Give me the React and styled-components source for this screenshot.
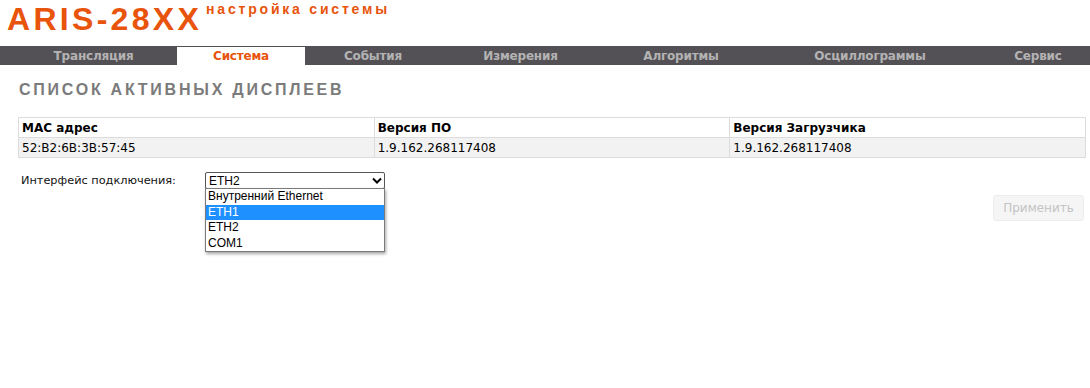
import React from "react";
import styled, { createGlobalStyle } from "styled-components";

const GlobalStyle = createGlobalStyle`
  html, body {
    margin: 0;
    padding: 0;
    background: #fff;
  }
  body {
    font-family: "DejaVu Sans", Verdana, sans-serif;
    font-size: 12px;
    color: #000;
  }
`;

const Page = styled.div`
  width: 1090px;
  height: 388px;
  overflow: hidden;
`;

const Header = styled.header`
  display: flex;
  align-items: flex-start;
  height: 46px;
  padding-left: 7px;
  box-sizing: border-box;
`;

const Logo = styled.h1`
  margin: 0;
  padding-top: 2px;
  font-family: "Liberation Sans", Arial, sans-serif;
  font-size: 32px;
  font-weight: bold;
  letter-spacing: 3.3px;
  line-height: 34px;
  color: #e8540c;
`;

const Subtitle = styled.span`
  margin-left: 4px;
  padding-top: 1px;
  font-family: "Liberation Sans", Arial, sans-serif;
  font-size: 14px;
  font-weight: bold;
  letter-spacing: 2.8px;
  line-height: 16px;
  color: #e8540c;
`;

const Nav = styled.nav`
  display: grid;
  grid-template-columns: 177px 128px 136px 159px 162px 216px 1fr;
  height: 19px;
  background: #545156;
`;

const Tab = styled.div`
  display: flex;
  align-items: center;
  justify-content: center;
  margin-top: ${(p) => (p.$active ? "1px" : "0")};
  padding-left: ${(p) => p.$shift || 0}px;
  font-family: "DejaVu Sans", Verdana, sans-serif;
  font-size: 12px;
  font-weight: bold;
  letter-spacing: -0.2px;
  color: ${(p) => (p.$active ? "#e8540c" : "#b3b3b3")};
  background: ${(p) => (p.$active ? "#fff" : "transparent")};
`;

const Content = styled.main`
  padding: 0 4px 0 18px;
`;

const Title = styled.h2`
  margin: 16px 0 18px 1px;
  font-family: "Liberation Sans", Arial, sans-serif;
  font-size: 16px;
  font-weight: bold;
  letter-spacing: 2.75px;
  line-height: 18px;
  color: #7b7b7b;
`;

const Table = styled.table`
  width: 1068px;
  border-collapse: collapse;
  table-layout: fixed;

  th, td {
    border: 1px solid #dcdcdc;
    height: 19px;
    padding: 0 0 0 3px;
    text-align: left;
    font-size: 12px;
    line-height: 18px;
  }
  th {
    font-weight: bold;
  }
  tbody tr {
    background: #f2f2f2;
  }
`;

const FormRow = styled.div`
  display: flex;
  align-items: center;
  margin-top: 14px;
  padding-left: 3px;
`;

const Label = styled.label`
  width: 184px;
  font-size: 11.3px;
  color: #111;
`;

const SelectWrap = styled.div`
  position: relative;
  width: 180px;
`;

const SelectBox = styled.div`
  display: flex;
  align-items: center;
  justify-content: space-between;
  height: 17px;
  box-sizing: border-box;
  padding: 0 2px 0 3px;
  border: 1px solid #555;
  border-radius: 2px;
  font-family: "Liberation Sans", Arial, sans-serif;
  font-size: 12px;
  background: #fff;
`;

const DropList = styled.ul`
  position: absolute;
  top: 16px;
  left: 0;
  width: 180px;
  box-sizing: border-box;
  margin: 0;
  padding: 0;
  list-style: none;
  border: 1px solid #7a7a7a;
  background: #fff;
  box-shadow: 1px 2px 3px rgba(0, 0, 0, 0.35);
  z-index: 2;
`;

const Option = styled.li`
  height: 15.5px;
  line-height: 15px;
  padding-left: 2px;
  font-family: "Liberation Sans", Arial, sans-serif;
  font-size: 12px;
  color: ${(p) => (p.$selected ? "#fff" : "#000")};
  background: ${(p) => (p.$selected ? "#1e90ff" : "transparent")};
`;

const Actions = styled.div`
  display: flex;
  justify-content: flex-end;
  margin-top: 6px;
  padding-right: 2px;
`;

const ApplyButton = styled.button`
  width: 91px;
  height: 26px;
  border: 1px solid #ececec;
  border-radius: 3px;
  background: #f5f5f5;
  color: #c4c4c4;
  font-family: "DejaVu Sans", Verdana, sans-serif;
  font-size: 12px;
  cursor: default;
`;

const tabs = [
  { name: "Трансляция", shift: 10 },
  { name: "Система", active: true },
  { name: "События" },
  { name: "Измерения" },
  { name: "Алгоритмы" },
  { name: "Осциллограммы" },
  { name: "Сервис", shift: 8 },
];

const options = ["Внутренний Ethernet", "ETH1", "ETH2", "COM1"];

function Chevron() {
  return (
    <svg width="10" height="7" viewBox="0 0 10 7">
      <path d="M1 1.5 L5 5.5 L9 1.5" fill="none" stroke="#000" strokeWidth="2" />
    </svg>
  );
}

export default function App() {
  return (
    <Page>
      <GlobalStyle />
      <Header>
        <Logo>ARIS-28XX</Logo>
        <Subtitle>настройка системы</Subtitle>
      </Header>
      <Nav>
        {tabs.map((t) => (
          <Tab key={t.name} $active={t.active} $shift={t.shift}>
            {t.name}
          </Tab>
        ))}
      </Nav>
      <Content>
        <Title>СПИСОК АКТИВНЫХ ДИСПЛЕЕВ</Title>
        <Table>
          <thead>
            <tr>
              <th>MAC адрес</th>
              <th>Версия ПО</th>
              <th>Версия Загрузчика</th>
            </tr>
          </thead>
          <tbody>
            <tr>
              <td>52:B2:6B:3B:57:45</td>
              <td>1.9.162.268117408</td>
              <td>1.9.162.268117408</td>
            </tr>
          </tbody>
        </Table>
        <FormRow>
          <Label>Интерфейс подключения:</Label>
          <SelectWrap>
            <SelectBox>
              <span>ETH2</span>
              <Chevron />
            </SelectBox>
            <DropList>
              {options.map((o) => (
                <Option key={o} $selected={o === "ETH1"}>
                  {o}
                </Option>
              ))}
            </DropList>
          </SelectWrap>
        </FormRow>
        <Actions>
          <ApplyButton disabled>Применить</ApplyButton>
        </Actions>
      </Content>
    </Page>
  );
}
